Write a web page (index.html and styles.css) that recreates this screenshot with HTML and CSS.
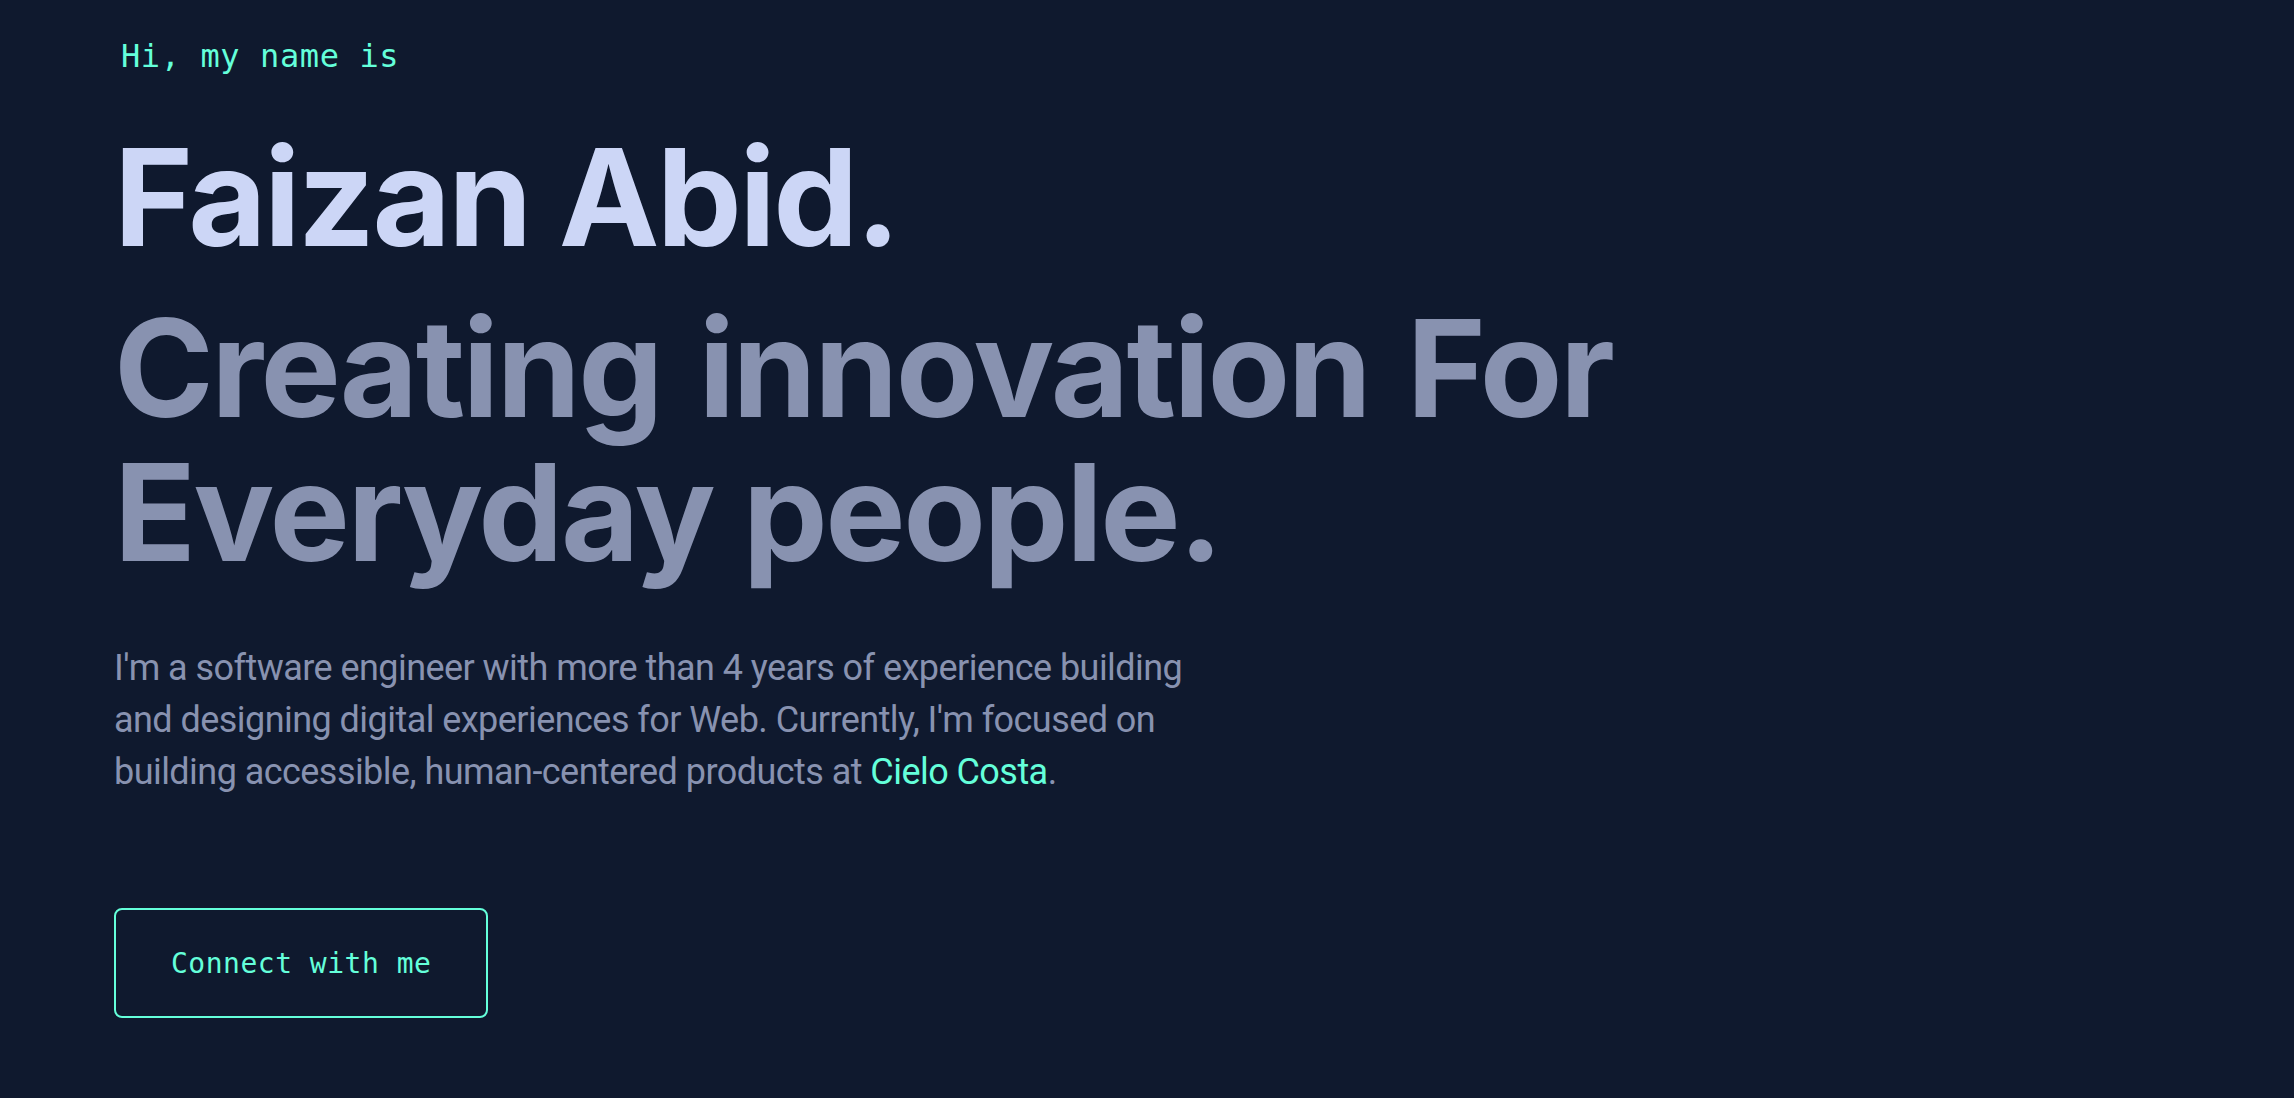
FILE: index.html
```html
<!DOCTYPE html>
<html lang="en">
<head>
<meta charset="utf-8">
<title>Faizan Abid</title>
<link rel="stylesheet" href="styles.css">
</head>
<body>
<main class="hero">
  <h1 class="intro">Hi, my name is</h1>
  <h2 class="name">Faizan Abid.</h2>
  <h3 class="tagline"><span class="line">Creating innovation For</span><span class="line">Everyday people.</span></h3>
  <p class="about">I'm a software engineer with more than 4 years of experience building and designing digital experiences for Web. Currently, I'm focused on building accessible, human-centered products at <a class="link" href="#">Cielo Costa</a>.</p>
  <a class="connect" href="#">Connect with me</a>
</main>
</body>
</html>
```

FILE: styles.css
```css
html, body {
  margin: 0;
  padding: 0;
  background: #0f192e;
  height: 100%;
}

.hero {
  display: flex;
  flex-direction: column;
  align-items: flex-start;
  padding: 36px 0 0 114px;
}

.intro {
  margin: 0 0 0 7px;
  font-family: "DejaVu Sans Mono", monospace;
  font-weight: 400;
  font-size: 32px;
  line-height: 40px;
  letter-spacing: 0.6px;
  color: #64ffda;
}

.name {
  margin: 47px 0 0 0;
  font-family: Inter, "Liberation Sans", sans-serif;
  font-weight: 700;
  font-size: 135px;
  line-height: 148.5px;
  letter-spacing: -2.7px;
  color: #ccd6f6;
}

.tagline {
  margin: 24px 0 0 0;
  display: flex;
  flex-direction: column;
  font-family: Inter, "Liberation Sans", sans-serif;
  font-weight: 700;
  font-size: 135px;
  line-height: 144px;
  letter-spacing: -2.5px;
  color: #8892b0;
}

.line {
  display: block;
  white-space: nowrap;
}

.line:first-child {
  word-spacing: 8px;
}

.about {
  margin: 58px 0 0 0;
  max-width: 1100px;
  font-family: Roboto, "Liberation Sans", sans-serif;
  font-size: 36px;
  line-height: 52px;
  letter-spacing: -0.55px;
  color: #8892b0;
}

.link {
  color: #64ffda;
  text-decoration: none;
}

.connect {
  margin-top: 110px;
  padding: 40px 55px 38px 55px;
  border: 2px solid #64ffda;
  border-radius: 8px;
  font-family: "DejaVu Sans Mono", monospace;
  font-size: 28px;
  line-height: 28px;
  letter-spacing: 0.5px;
  color: #64ffda;
  text-decoration: none;
}
```
